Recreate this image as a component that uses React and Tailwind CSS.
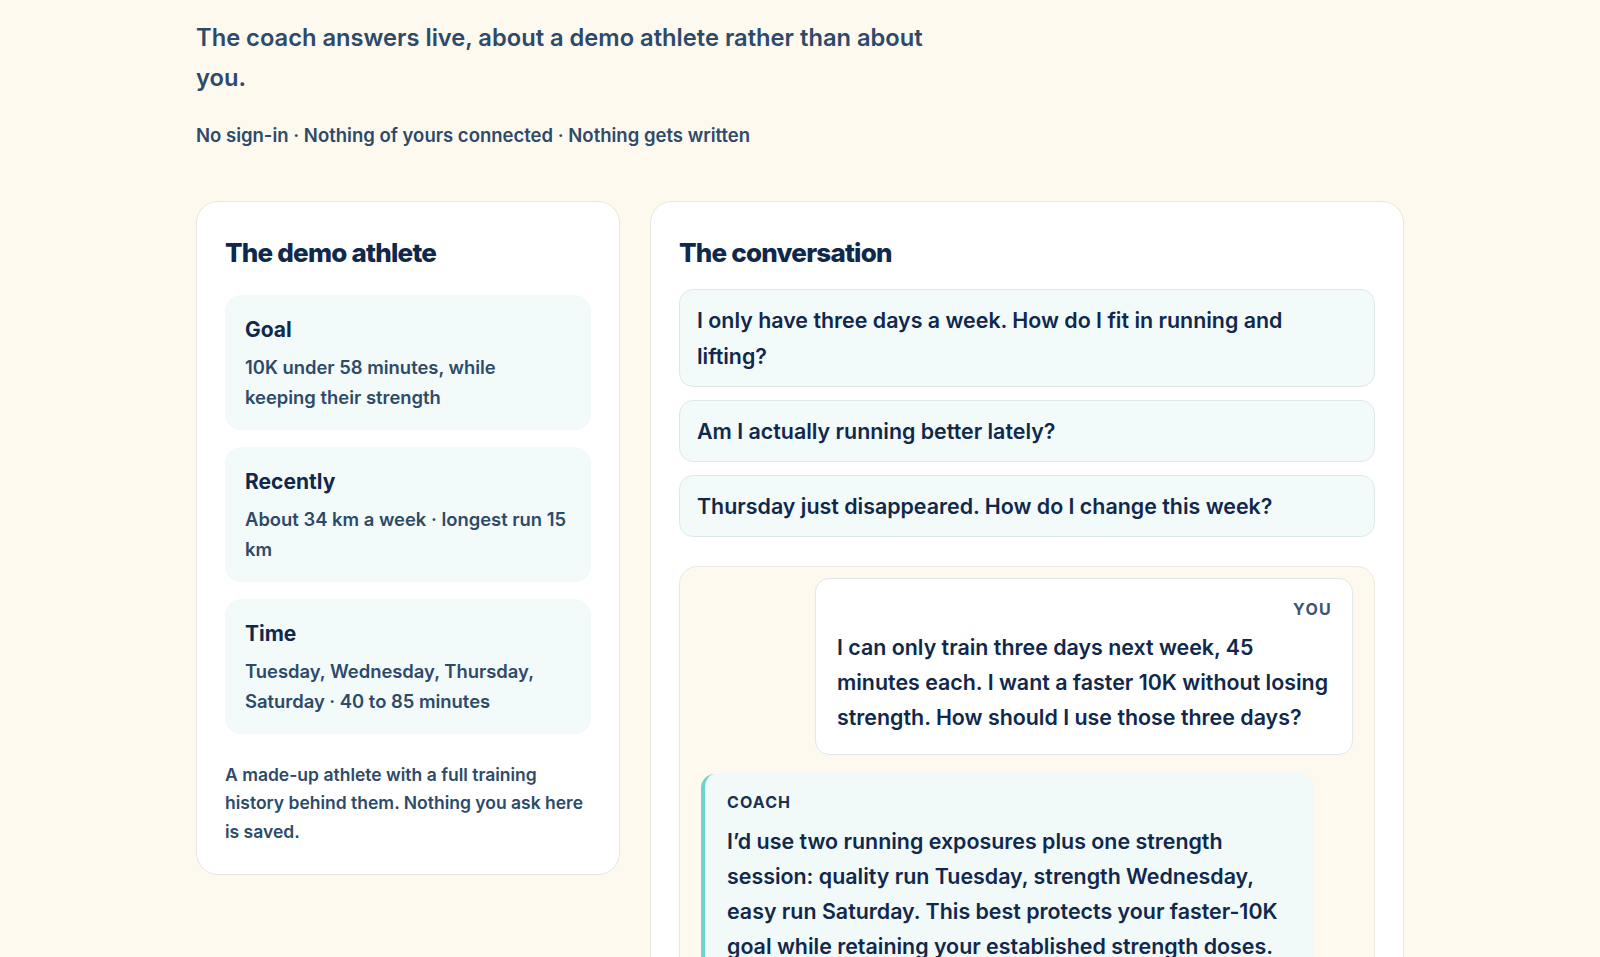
const facts = [
  { label: 'Goal', text: '10K under 58 minutes, while keeping their strength' },
  { label: 'Recently', text: 'About 34 km a week · longest run 15 km' },
  { label: 'Time', text: 'Tuesday, Wednesday, Thursday, Saturday · 40 to 85 minutes' },
]

const questions = [
  'I only have three days a week. How do I fit in running and lifting?',
  'Am I actually running better lately?',
  'Thursday just disappeared. How do I change this week?',
]

function AthleteCard() {
  return (
    <section className="bg-white border border-[#e7e8e2] rounded-[22px] p-7">
      <h2 className="text-[26px] leading-[46px] font-extrabold tracking-[-0.03em] text-[#10284c] mb-[19px]">
        The demo athlete
      </h2>
      <div className="flex flex-col gap-[17px]">
        {facts.map((f) => (
          <div key={f.label} className="bg-[#f3fafa] rounded-[16px] pt-[21px] pb-[18px] pl-5 pr-6">
            <div className="text-[21px] leading-[28px] font-bold text-[#10284c]">{f.label}</div>
            <p className="mt-2 text-[18.4px] leading-[30px] font-semibold text-[#2d4a69]">{f.text}</p>
          </div>
        ))}
      </div>
      <p className="mt-[27px] text-[17.5px] leading-[28.6px] font-semibold text-[#2d4a69]">
        A made-up athlete with a full training history behind them. Nothing you ask here is saved.
      </p>
    </section>
  )
}

function ConversationCard() {
  return (
    <section className="bg-white border border-[#e7e8e2] rounded-[22px] p-7 pb-10">
      <h2 className="text-[26px] leading-[46px] font-extrabold tracking-[-0.03em] text-[#10284c] mb-[13px]">
        The conversation
      </h2>
      <div className="flex flex-col gap-[13px]">
        {questions.map((q) => (
          <button
            key={q}
            className="text-left bg-[#f3fafa] border border-[#dfe8e9] rounded-[14px] px-[17px] py-[12px] text-[21.4px] leading-[36px] font-semibold text-[#10284c]"
          >
            {q}
          </button>
        ))}
      </div>

      <div className="mt-[29px] bg-[#fdf9ef] border border-[#ebe9e1] rounded-[18px] pt-[11px] px-[21px] pb-6">
        <div className="ml-auto w-[538px] bg-white border border-[#e2e7e8] rounded-[14px] pt-5 pb-[18px] pl-[21px] pr-[20px]">
          <div className="text-right text-[16px] leading-5 font-bold tracking-[0.08em] text-[#3a5472]">YOU</div>
          <p className="mt-[11px] text-[21.4px] leading-[35.3px] font-semibold text-[#10284c]">
            I can only train three days next week, 45 minutes each. I want a faster 10K without losing
            strength. How should I use those three days?
          </p>
        </div>

        <div className="mt-[19px] w-[613px] bg-[#f2f9f9] border-l-4 border-[#6cd4c8] rounded-[14px] pt-[18px] pb-5 pl-[22px] pr-[22px]">
          <div className="text-[16px] leading-5 font-bold tracking-[0.07em] text-[#1b2f50]">COACH</div>
          <p className="mt-3 text-[21.4px] leading-[35px] font-semibold text-[#10284c]">
            I’d use two running exposures plus one strength session: quality run Tuesday, strength
            Wednesday, easy run Saturday. This best protects your faster-10K goal while retaining your
            established strength doses.
          </p>
        </div>
      </div>
    </section>
  )
}

export default function App() {
  return (
    <div className="min-h-screen bg-[#fdf9ef] font-['Inter',sans-serif] pb-16">
      <main className="max-w-[1208px] mx-auto pt-[18px]">
        <p className="max-w-[760px] text-[23.7px] leading-[1.67] font-semibold text-[#2d4a69]">
          The coach answers live, about a demo athlete rather than about you.
        </p>
        <p className="mt-[23px] text-[18.5px] leading-[30.5px] font-semibold text-[#2d4a69]">
          No sign-in · Nothing of yours connected · Nothing gets written
        </p>

        <div className="mt-[50px] grid grid-cols-[424px_1fr] gap-[30px] items-start">
          <AthleteCard />
          <ConversationCard />
        </div>
      </main>
    </div>
  )
}
